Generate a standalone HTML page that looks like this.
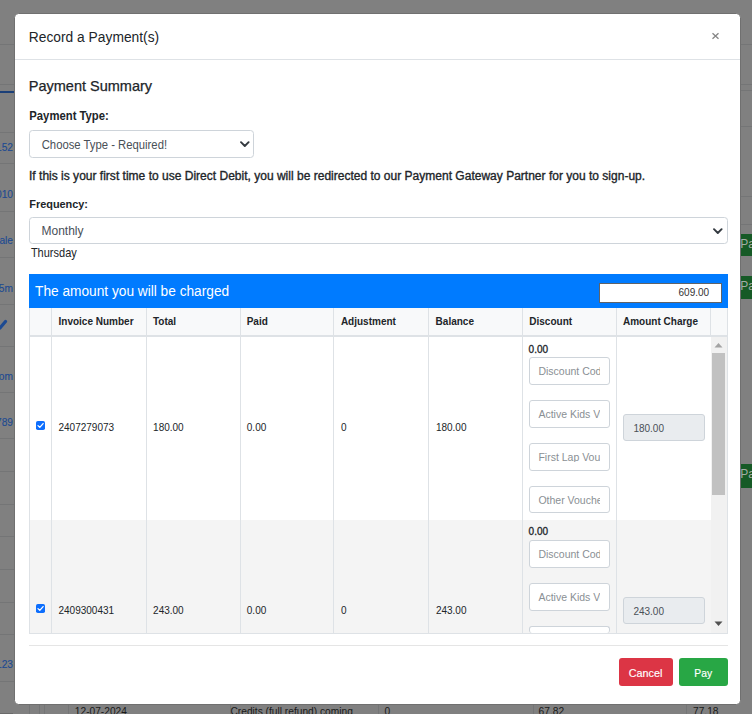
<!DOCTYPE html>
<html><head><meta charset="utf-8"><style>
html,body{margin:0;padding:0;}
body{width:752px;height:714px;position:relative;overflow:hidden;background:#808080;font-family:"Liberation Sans",sans-serif;}
.t{position:absolute;line-height:1;white-space:nowrap;}
</style></head><body>
<div style="position:absolute;left:0px;top:44px;width:14px;height:1px;background:#747576"></div>
<div style="position:absolute;left:0px;top:84px;width:14px;height:1px;background:#747576"></div>
<div style="position:absolute;left:0px;top:132px;width:14px;height:1px;background:#747576"></div>
<div style="position:absolute;left:0px;top:163px;width:14px;height:1px;background:#747576"></div>
<div style="position:absolute;left:0px;top:211px;width:14px;height:1px;background:#747576"></div>
<div style="position:absolute;left:0px;top:257px;width:14px;height:1px;background:#747576"></div>
<div style="position:absolute;left:0px;top:303.5px;width:14px;height:1.0px;background:#747576"></div>
<div style="position:absolute;left:0px;top:345.5px;width:14px;height:1.0px;background:#747576"></div>
<div style="position:absolute;left:0px;top:392px;width:14px;height:1px;background:#747576"></div>
<div style="position:absolute;left:0px;top:438px;width:14px;height:1px;background:#747576"></div>
<div style="position:absolute;left:0px;top:471px;width:14px;height:1px;background:#747576"></div>
<div style="position:absolute;left:0px;top:504px;width:14px;height:1px;background:#747576"></div>
<div style="position:absolute;left:0px;top:536px;width:14px;height:1px;background:#747576"></div>
<div style="position:absolute;left:0px;top:569px;width:14px;height:1px;background:#747576"></div>
<div style="position:absolute;left:0px;top:602px;width:14px;height:1px;background:#747576"></div>
<div style="position:absolute;left:0px;top:634px;width:14px;height:1px;background:#747576"></div>
<div style="position:absolute;left:0px;top:680.5px;width:14px;height:1.0px;background:#747576"></div>
<div style="position:absolute;left:0px;top:91px;width:14px;height:2px;background:#1b3f78"></div>
<div class="t" style="right:739.00px;top:143.47px;font-size:10.2px;font-weight:normal;color:#1c4a92;-webkit-text-stroke:0.1px #1c4a92">152</div>
<div class="t" style="right:739.00px;top:189.77px;font-size:10.2px;font-weight:normal;color:#1c4a92;-webkit-text-stroke:0.1px #1c4a92">010</div>
<div class="t" style="right:739.00px;top:236.17px;font-size:10.2px;font-weight:normal;color:#1c4a92;-webkit-text-stroke:0.1px #1c4a92">lale</div>
<div class="t" style="right:739.00px;top:283.77px;font-size:10.2px;font-weight:normal;color:#1c4a92;-webkit-text-stroke:0.1px #1c4a92">5m</div>
<div class="t" style="right:739.00px;top:371.57px;font-size:10.2px;font-weight:normal;color:#1c4a92;-webkit-text-stroke:0.1px #1c4a92">om</div>
<div class="t" style="right:739.00px;top:418.17px;font-size:10.2px;font-weight:normal;color:#1c4a92;-webkit-text-stroke:0.1px #1c4a92">789</div>
<div class="t" style="right:739.00px;top:660.37px;font-size:10.2px;font-weight:normal;color:#1c4a92;-webkit-text-stroke:0.1px #1c4a92">123</div>
<svg style="position:absolute;left:-1px;top:317px" width="10" height="13" viewBox="0 0 10 13"><path d="M1 11 L6.5 4.5" stroke="#1c4a92" stroke-width="3.2" stroke-linecap="round"/></svg>
<div style="position:absolute;left:740px;top:44px;width:12px;height:1px;background:#747576"></div>
<div style="position:absolute;left:740px;top:84px;width:12px;height:1px;background:#747576"></div>
<div style="position:absolute;left:740px;top:90px;width:12px;height:1px;background:#747576"></div>
<div style="position:absolute;left:740px;top:125.5px;width:12px;height:1.0px;background:#747576"></div>
<div style="position:absolute;left:740px;top:195.5px;width:12px;height:1.0px;background:#747576"></div>
<div style="position:absolute;left:740px;top:224px;width:12px;height:1px;background:#747576"></div>
<div style="position:absolute;left:740px;top:234px;width:12px;height:22px;background:#165a26"></div>
<div class="t" style="left:740.30px;top:238.14px;font-size:12px;font-weight:normal;color:#a3aca5;">Pay</div>
<div style="position:absolute;left:740px;top:276px;width:12px;height:23px;background:#165a26"></div>
<div class="t" style="left:740.30px;top:279.64px;font-size:12px;font-weight:normal;color:#a3aca5;">Pay</div>
<div style="position:absolute;left:740px;top:464px;width:12px;height:24px;background:#165a26"></div>
<div class="t" style="left:740.30px;top:468.14px;font-size:12px;font-weight:normal;color:#a3aca5;">Pay</div>
<div style="position:absolute;left:28.6px;top:704px;width:1.0px;height:10px;background:#747576"></div>
<div style="position:absolute;left:39.2px;top:704px;width:1.0px;height:10px;background:#747576"></div>
<div style="position:absolute;left:44px;top:704px;width:1px;height:10px;background:#747576"></div>
<div style="position:absolute;left:68.2px;top:704px;width:1.0px;height:10px;background:#747576"></div>
<div style="position:absolute;left:229.5px;top:704px;width:1.0px;height:10px;background:#747576"></div>
<div style="position:absolute;left:378px;top:704px;width:1px;height:10px;background:#747576"></div>
<div style="position:absolute;left:532.5px;top:704px;width:1.0px;height:10px;background:#747576"></div>
<div style="position:absolute;left:686.2px;top:704px;width:1.0px;height:10px;background:#747576"></div>
<div style="position:absolute;left:0px;top:712.5px;width:13px;height:1.5px;background:#6a6a6a"></div>
<div class="t" style="left:74.80px;top:706.97px;font-size:10.2px;font-weight:normal;color:#1a1a1a;">12-07-2024</div>
<div class="t" style="left:230.50px;top:706.97px;font-size:10.2px;font-weight:normal;color:#1a1a1a;">Credits (full refund) coming</div>
<div class="t" style="left:384.60px;top:706.97px;font-size:10.2px;font-weight:normal;color:#1a1a1a;">0</div>
<div class="t" style="left:538.60px;top:706.97px;font-size:10.2px;font-weight:normal;color:#1a1a1a;">67.82</div>
<div class="t" style="left:693.00px;top:706.97px;font-size:10.2px;font-weight:normal;color:#1a1a1a;">77.18</div>
<div style="position:absolute;left:14px;top:13px;width:727px;height:692px;background:#fff;border:1px solid #707070;border-radius:4.5px;box-sizing:border-box"></div>
<div class="t" style="left:28.80px;top:30.72px;font-size:13.8px;font-weight:normal;color:#212529;;transform:scaleY(1.08);transform-origin:0 11.68px">Record a Payment(s)</div>
<svg style="position:absolute;left:711px;top:32px" width="9" height="8" viewBox="0 0 9 8"><path d="M1.5 1.2 L7.5 6.8 M7.5 1.2 L1.5 6.8" stroke="#858585" stroke-width="1.3"/></svg>
<div style="position:absolute;left:15px;top:59px;width:725px;height:1px;background:#dee2e6"></div>
<div class="t" style="left:28.80px;top:79.23px;font-size:14.5px;font-weight:normal;color:#212529;-webkit-text-stroke:0.25px #212529">Payment Summary</div>
<div class="t" style="left:29.30px;top:110.73px;font-size:11.3px;font-weight:bold;color:#212529;;transform:scaleY(1.06);transform-origin:0 9.57px">Payment Type:</div>
<div style="position:absolute;left:29px;top:130px;width:225px;height:27.5px;border:1px solid #ced4da;border-radius:3.5px;box-sizing:border-box;background:#fff"></div>
<div class="t" style="left:41.70px;top:140.03px;font-size:11.3px;font-weight:normal;color:#495057;;transform:scaleY(1.14);transform-origin:0 9.57px">Choose Type - Required!</div>
<svg style="position:absolute;left:239.7px;top:141.2px" width="10" height="7" viewBox="0 0 10 7"><path d="M1 1.2 L4.8 5 L8.6 1.2" fill="none" stroke="#343a40" stroke-width="1.9" stroke-linecap="round" stroke-linejoin="round"/></svg>
<div class="t" style="left:29.00px;top:170.44px;font-size:12px;font-weight:normal;color:#212529;-webkit-text-stroke:0.35px #212529;letter-spacing:0.01px">If this is your first time to use Direct Debit, you will be redirected to our Payment Gateway Partner for you to sign-up.</div>
<div class="t" style="left:29.30px;top:199.27px;font-size:10.9px;font-weight:bold;color:#212529;;transform:scaleY(1.06);transform-origin:0 9.23px">Frequency:</div>
<div style="position:absolute;left:29px;top:217.3px;width:698.5px;height:26.69999999999999px;border:1px solid #ced4da;border-radius:3.5px;box-sizing:border-box;background:#fff"></div>
<div class="t" style="left:41.50px;top:224.54px;font-size:12px;font-weight:normal;color:#495057;">Monthly</div>
<svg style="position:absolute;left:713.2px;top:227.8px" width="10" height="7" viewBox="0 0 10 7"><path d="M1 1.2 L4.8 5 L8.6 1.2" fill="none" stroke="#343a40" stroke-width="1.9" stroke-linecap="round" stroke-linejoin="round"/></svg>
<div class="t" style="left:30.90px;top:248.19px;font-size:11px;font-weight:normal;color:#212529;;transform:scaleY(1.1);transform-origin:0 9.31px">Thursday</div>
<div style="position:absolute;left:29px;top:274px;width:699px;height:34px;background:#007bff"></div>
<div class="t" style="left:35.10px;top:285.00px;font-size:13.7px;font-weight:normal;color:#fff;;transform:scaleY(1.1);transform-origin:0 11.60px">The amount you will be charged</div>
<div style="position:absolute;left:599px;top:283px;width:123px;height:20px;background:#fff;border:1px solid #5f6368;box-sizing:border-box"></div>
<div class="t" style="right:42.90px;top:287.84px;font-size:10px;font-weight:normal;color:#333;">609.00</div>
<div style="position:absolute;left:29px;top:308px;width:699px;height:29px;background:#f8f9fa"></div>
<div style="position:absolute;left:29px;top:335px;width:699px;height:2px;background:#dee2e6"></div>
<div style="position:absolute;left:29px;top:308px;width:1px;height:27px;background:#dee2e6"></div>
<div style="position:absolute;left:51px;top:308px;width:1px;height:27px;background:#dee2e6"></div>
<div style="position:absolute;left:146px;top:308px;width:1px;height:27px;background:#dee2e6"></div>
<div style="position:absolute;left:240px;top:308px;width:1px;height:27px;background:#dee2e6"></div>
<div style="position:absolute;left:333px;top:308px;width:1px;height:27px;background:#dee2e6"></div>
<div style="position:absolute;left:428px;top:308px;width:1px;height:27px;background:#dee2e6"></div>
<div style="position:absolute;left:522px;top:308px;width:1px;height:27px;background:#dee2e6"></div>
<div style="position:absolute;left:616px;top:308px;width:1px;height:27px;background:#dee2e6"></div>
<div style="position:absolute;left:710px;top:308px;width:1px;height:27px;background:#dee2e6"></div>
<div style="position:absolute;left:727px;top:308px;width:1px;height:27px;background:#dee2e6"></div>
<div class="t" style="left:58.50px;top:316.84px;font-size:10px;font-weight:bold;color:#212529;">Invoice Number</div>
<div class="t" style="left:153.00px;top:316.84px;font-size:10px;font-weight:bold;color:#212529;">Total</div>
<div class="t" style="left:246.70px;top:316.84px;font-size:10px;font-weight:bold;color:#212529;">Paid</div>
<div class="t" style="left:340.90px;top:316.84px;font-size:10px;font-weight:bold;color:#212529;">Adjustment</div>
<div class="t" style="left:435.60px;top:316.84px;font-size:10px;font-weight:bold;color:#212529;">Balance</div>
<div class="t" style="left:529.30px;top:316.84px;font-size:10px;font-weight:bold;color:#212529;">Discount</div>
<div class="t" style="left:623.00px;top:316.84px;font-size:10px;font-weight:bold;color:#212529;">Amount Charge</div>
<div style="position:absolute;left:29px;top:337px;width:682px;height:183px;background:#fff"></div>
<div style="position:absolute;left:29px;top:520px;width:682px;height:113px;background:#f4f4f4"></div>
<div style="position:absolute;left:29px;top:337px;width:1px;height:296px;background:#dee2e6"></div>
<div style="position:absolute;left:51px;top:337px;width:1px;height:296px;background:#dee2e6"></div>
<div style="position:absolute;left:146px;top:337px;width:1px;height:296px;background:#dee2e6"></div>
<div style="position:absolute;left:240px;top:337px;width:1px;height:296px;background:#dee2e6"></div>
<div style="position:absolute;left:333px;top:337px;width:1px;height:296px;background:#dee2e6"></div>
<div style="position:absolute;left:428px;top:337px;width:1px;height:296px;background:#dee2e6"></div>
<div style="position:absolute;left:522px;top:337px;width:1px;height:296px;background:#dee2e6"></div>
<div style="position:absolute;left:616px;top:337px;width:1px;height:296px;background:#dee2e6"></div>
<div style="position:absolute;left:727px;top:337px;width:1px;height:296px;background:#dee2e6"></div>
<div style="position:absolute;left:711px;top:337px;width:16px;height:296px;background:#f1f1f1"></div>
<div style="position:absolute;left:712.4px;top:353px;width:12.600000000000023px;height:142px;background:#c1c1c1"></div>
<svg style="position:absolute;left:714px;top:342px" width="9" height="6" viewBox="0 0 9 6"><path d="M0.5 5.5 L4.5 1 L8.5 5.5Z" fill="#a3a3a3"/></svg>
<svg style="position:absolute;left:714px;top:621px" width="9" height="6" viewBox="0 0 9 6"><path d="M0.5 0.5 L4.5 5 L8.5 0.5Z" fill="#505050"/></svg>
<div style="position:absolute;left:29px;top:633px;width:699px;height:1px;background:#dee2e6"></div>
<svg style="position:absolute;left:36px;top:421px" width="9" height="9" viewBox="0 0 9 9"><rect x="0" y="0" width="9" height="9" rx="1.8" fill="#0d6efd"/><path d="M2 4.6 L3.8 6.4 L7.1 2.6" fill="none" stroke="#fff" stroke-width="1.3" stroke-linecap="round" stroke-linejoin="round"/></svg>
<div class="t" style="left:58.50px;top:422.74px;font-size:10px;font-weight:normal;color:#212529;">2407279073</div>
<div class="t" style="left:153.10px;top:422.74px;font-size:10px;font-weight:normal;color:#212529;">180.00</div>
<div class="t" style="left:246.80px;top:422.74px;font-size:10px;font-weight:normal;color:#212529;">0.00</div>
<div class="t" style="left:340.90px;top:422.74px;font-size:10px;font-weight:normal;color:#212529;">0</div>
<div class="t" style="left:435.90px;top:422.74px;font-size:10px;font-weight:normal;color:#212529;">180.00</div>
<div class="t" style="left:528.60px;top:344.64px;font-size:10px;font-weight:normal;color:#212529;-webkit-text-stroke:0.3px #212529">0.00</div>
<div style="position:absolute;left:529px;top:357.4px;width:81px;height:27.600000000000023px;background:#fff;border:1px solid #ced4da;border-radius:3px;box-sizing:border-box"></div>
<div class="t" style="left:538.4px;top:366.21px;width:61.5px;overflow:hidden;font-size:10.5px;color:#8a8f94">Discount Cod</div>
<div style="position:absolute;left:529px;top:400.2px;width:81px;height:27.600000000000023px;background:#fff;border:1px solid #ced4da;border-radius:3px;box-sizing:border-box"></div>
<div class="t" style="left:538.4px;top:409.01px;width:61.5px;overflow:hidden;font-size:10.5px;color:#8a8f94">Active Kids Vo</div>
<div style="position:absolute;left:529px;top:443.0px;width:81px;height:27.600000000000023px;background:#fff;border:1px solid #ced4da;border-radius:3px;box-sizing:border-box"></div>
<div class="t" style="left:538.4px;top:451.81px;width:61.5px;overflow:hidden;font-size:10.5px;color:#8a8f94">First Lap Vouc</div>
<div style="position:absolute;left:529px;top:485.79999999999995px;width:81px;height:27.600000000000023px;background:#fff;border:1px solid #ced4da;border-radius:3px;box-sizing:border-box"></div>
<div class="t" style="left:538.4px;top:494.61px;width:61.5px;overflow:hidden;font-size:10.5px;color:#8a8f94">Other Vouche</div>
<div style="position:absolute;left:623px;top:414.3px;width:82px;height:26.599999999999966px;background:#e9ecef;border:1px solid #ced4da;border-radius:3px;box-sizing:border-box"></div>
<div class="t" style="left:633.40px;top:423.74px;font-size:10px;font-weight:normal;color:#495057;">180.00</div>
<svg style="position:absolute;left:36px;top:604px" width="9" height="9" viewBox="0 0 9 9"><rect x="0" y="0" width="9" height="9" rx="1.8" fill="#0d6efd"/><path d="M2 4.6 L3.8 6.4 L7.1 2.6" fill="none" stroke="#fff" stroke-width="1.3" stroke-linecap="round" stroke-linejoin="round"/></svg>
<div class="t" style="left:58.50px;top:605.53px;font-size:10px;font-weight:normal;color:#212529;">2409300431</div>
<div class="t" style="left:153.10px;top:605.53px;font-size:10px;font-weight:normal;color:#212529;">243.00</div>
<div class="t" style="left:246.80px;top:605.53px;font-size:10px;font-weight:normal;color:#212529;">0.00</div>
<div class="t" style="left:340.90px;top:605.53px;font-size:10px;font-weight:normal;color:#212529;">0</div>
<div class="t" style="left:435.90px;top:605.53px;font-size:10px;font-weight:normal;color:#212529;">243.00</div>
<div class="t" style="left:528.60px;top:527.43px;font-size:10px;font-weight:normal;color:#212529;-webkit-text-stroke:0.3px #212529">0.00</div>
<div style="position:absolute;left:529px;top:540.1999999999999px;width:81px;height:27.600000000000023px;background:#fff;border:1px solid #ced4da;border-radius:3px;box-sizing:border-box"></div>
<div class="t" style="left:538.4px;top:549.01px;width:61.5px;overflow:hidden;font-size:10.5px;color:#8a8f94">Discount Cod</div>
<div style="position:absolute;left:529px;top:582.9999999999999px;width:81px;height:27.600000000000023px;background:#fff;border:1px solid #ced4da;border-radius:3px;box-sizing:border-box"></div>
<div class="t" style="left:538.4px;top:591.81px;width:61.5px;overflow:hidden;font-size:10.5px;color:#8a8f94">Active Kids Vo</div>
<div style="position:absolute;left:529px;top:625.8px;width:81px;height:7.2000000000000455px;background:#fff;border:1px solid #ced4da;border-radius:3px;box-sizing:border-box;border-bottom:none"></div>
<div style="position:absolute;left:623px;top:597.0999999999999px;width:82px;height:26.600000000000023px;background:#e9ecef;border:1px solid #ced4da;border-radius:3px;box-sizing:border-box"></div>
<div class="t" style="left:633.40px;top:606.53px;font-size:10px;font-weight:normal;color:#495057;">243.00</div>
<div style="position:absolute;left:29px;top:645px;width:698.5px;height:1px;background:#e5e5e5"></div>
<div style="position:absolute;left:618.6px;top:657.8px;width:54.10000000000002px;height:28.0px;background:#dc3545;border-radius:3px"></div>
<div style="position:absolute;left:678.6px;top:657.8px;width:49.299999999999955px;height:28.0px;background:#28a745;border-radius:3px"></div>
<div class="t" style="left:628.80px;top:668.36px;font-size:10.8px;font-weight:normal;color:#fff;-webkit-text-stroke:0.15px #fff;transform:scaleY(1.08);transform-origin:0 9.14px">Cancel</div>
<div class="t" style="left:694.30px;top:668.88px;font-size:10.3px;font-weight:normal;color:#fff;-webkit-text-stroke:0.15px #fff;transform:scaleY(1.08);transform-origin:0 8.72px">Pay</div>
</body></html>
